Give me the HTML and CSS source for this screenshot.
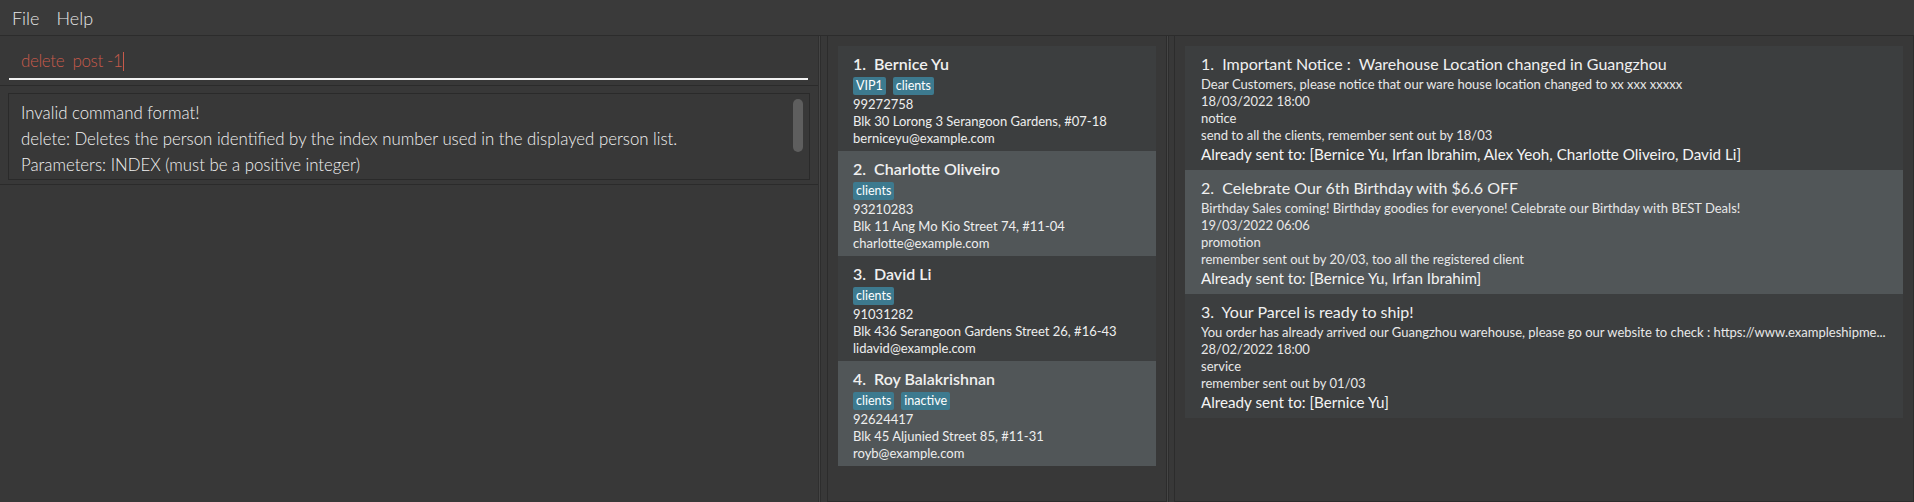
FILE: index.html
```html
<!DOCTYPE html>
<html>
<head>
<meta charset="utf-8">
<link rel="stylesheet" href="styles.css">
</head>
<body>
<div class="app">
  <div class="menubar">
    <span class="menu">File</span>
    <span class="menu">Help</span>
  </div>
  <div class="main">
    <div class="left">
      <div class="command">
        <div class="cmd-input"><span class="cmd-text">delete&nbsp; post -1</span><span class="caret"></span></div>
      </div>
      <div class="result-pane">
        <div class="result-box">
          <div class="result-text">
            <div>Invalid command format!</div>
            <div>delete: Deletes the person identified by the index number used in the displayed person list.</div>
            <div>Parameters: INDEX (must be a positive integer)</div>
          </div>
          <div class="scroll-thumb"></div>
        </div>
      </div>
      <div class="left-rest"></div>
    </div>
    <div class="split"></div>
    <div class="persons">
      <div class="list-box">
        <div class="pcard odd">
          <div class="pname">1.&nbsp; Bernice Yu</div>
          <div class="tags"><span class="tag">VIP1</span><span class="tag">clients</span></div>
          <div class="pline">99272758</div>
          <div class="pline">Blk 30 Lorong 3 Serangoon Gardens, #07-18</div>
          <div class="pline">berniceyu@example.com</div>
        </div>
        <div class="pcard even">
          <div class="pname">2.&nbsp; Charlotte Oliveiro</div>
          <div class="tags"><span class="tag">clients</span></div>
          <div class="pline">93210283</div>
          <div class="pline">Blk 11 Ang Mo Kio Street 74, #11-04</div>
          <div class="pline">charlotte@example.com</div>
        </div>
        <div class="pcard odd">
          <div class="pname">3.&nbsp; David Li</div>
          <div class="tags"><span class="tag">clients</span></div>
          <div class="pline">91031282</div>
          <div class="pline">Blk 436 Serangoon Gardens Street 26, #16-43</div>
          <div class="pline">lidavid@example.com</div>
        </div>
        <div class="pcard even">
          <div class="pname">4.&nbsp; Roy Balakrishnan</div>
          <div class="tags"><span class="tag">clients</span><span class="tag">inactive</span></div>
          <div class="pline">92624417</div>
          <div class="pline">Blk 45 Aljunied Street 85, #11-31</div>
          <div class="pline">royb@example.com</div>
        </div>
      </div>
    </div>
    <div class="split"></div>
    <div class="posts">
      <div class="list-box">
        <div class="post odd">
          <div class="ptitle">1.&nbsp; Important Notice :&nbsp; Warehouse Location changed in Guangzhou</div>
          <div class="plines">
            <div class="qline">Dear Customers, please notice that our ware house location changed to xx xxx xxxxx</div>
            <div class="qline">18/03/2022 18:00</div>
            <div class="qline">notice</div>
            <div class="qline">send to all the clients, remember sent out by 18/03</div>
          </div>
          <div class="sent">Already sent to: [Bernice Yu, Irfan Ibrahim, Alex Yeoh, Charlotte Oliveiro, David Li]</div>
        </div>
        <div class="post even">
          <div class="ptitle">2.&nbsp; Celebrate Our 6th Birthday with $6.6 OFF</div>
          <div class="plines">
            <div class="qline">Birthday Sales coming! Birthday goodies for everyone! Celebrate our Birthday with BEST Deals!</div>
            <div class="qline">19/03/2022 06:06</div>
            <div class="qline">promotion</div>
            <div class="qline">remember sent out by 20/03, too all the registered client</div>
          </div>
          <div class="sent">Already sent to: [Bernice Yu, Irfan Ibrahim]</div>
        </div>
        <div class="post odd">
          <div class="ptitle">3.&nbsp; Your Parcel is ready to ship!</div>
          <div class="plines">
            <div class="qline">You order has already arrived our Guangzhou warehouse, please go our website to check : https://www.exampleshipme...</div>
            <div class="qline">28/02/2022 18:00</div>
            <div class="qline">service</div>
            <div class="qline">remember sent out by 01/03</div>
          </div>
          <div class="sent">Already sent to: [Bernice Yu]</div>
        </div>
      </div>
    </div>
  </div>
</div>
</body>
</html>
```
FILE: styles.css
```css
html, body {
  margin: 0;
  padding: 0;
  background: #383838;
  width: 1914px;
  height: 502px;
  overflow: hidden;
  font-family: Lato, "Open Sans", sans-serif;
  color: #eeeeee;
}
.app {
  display: flex;
  flex-direction: column;
  height: 502px;
}
.menubar {
  height: 35px;
  border-bottom: 1px solid #2c2c2c;
  display: flex;
  align-items: center;
  padding-left: 12px;
  gap: 17px;
  background: #3a3a3a;
}
.menu {
  font-size: 18px;
  font-weight: 300;
  color: #e6e6e6;
}
.main {
  flex: 1;
  display: flex;
  min-height: 0;
}
.left {
  width: 818px;
  display: flex;
  flex-direction: column;
  border-right: 1px solid #2f2f2f;
}
.command {
  height: 50px;
  border-bottom: 1px solid #2b2b2b;
  padding: 0 9px 5px 9px;
  box-sizing: border-box;
  display: flex;
  flex-direction: column;
  justify-content: flex-end;
}
.cmd-input {
  height: 34px;
  border-bottom: 2px solid #f2f2f2;
  display: flex;
  align-items: flex-start;
  padding-left: 12px;
  padding-top: 4px;
  width: 799px;
  box-sizing: border-box;
}
.cmd-text {
  font-size: 17px;
  line-height: 22px;
  font-weight: 300;
  color: #c75a4b;
  white-space: pre;
  letter-spacing: -0.4px;
}
.caret {
  width: 1px;
  height: 19px;
  background: #c75a4b;
  margin-left: 1px;
  margin-top: 2px;
}
.result-pane {
  height: 99px;
  padding: 7px 8px 5px 8px;
  box-sizing: border-box;
  border-bottom: 1px solid #2b2b2b;
}
.result-box {
  height: 87px;
  border: 1px solid #2a2a2a;
  box-sizing: border-box;
  position: relative;
  padding: 6px 12px;
}
.result-text {
  font-size: 16.8px;
  font-weight: 300;
  line-height: 26px;
  color: #f2f2f2;
}
.scroll-thumb {
  position: absolute;
  left: 784px;
  top: 5px;
  width: 10px;
  height: 53px;
  border-radius: 5px;
  background: #5e5e5e;
}
.left-rest { flex: 1; }
.split {
  width: 1px;
  background: #454545;
  border-right: 1px solid #2d2d2d;
}
.persons {
  width: 346px;
  padding-left: 6px;
  box-sizing: border-box;
  display: flex;
}
.posts {
  flex: 1;
  padding-left: 5px;
  display: flex;
}
.list-box {
  flex: 1;
  border: 1px solid #2c2c2c;
  border-top: none;
  padding: 10px;
  display: flex;
  flex-direction: column;
}
.odd { background: #3c3e3f; }
.even { background: #515658; }
.pcard {
  height: 105px;
  box-sizing: border-box;
  padding: 7px 15px 0 15px;
}
.pname {
  font-size: 16px;
  font-weight: 600;
  line-height: 22px;
  color: #f0f0f0;
  white-space: pre;
}
.tags {
  display: flex;
  gap: 7px;
  margin-top: 2px;
  margin-bottom: 1px;
  height: 18px;
}
.tag {
  background: #3d7a8f;
  color: #ffffff;
  font-size: 12.5px;
  line-height: 18px;
  padding: 0 3px;
  border-radius: 2px;
}
.pline {
  font-size: 13px;
  line-height: 17px;
  color: #eeeeee;
  white-space: nowrap;
}
.post {
  height: 124px;
  box-sizing: border-box;
  padding: 8px 6px 0 16px;
}
.ptitle {
  font-size: 16px;
  line-height: 20px;
  color: #f0f0f0;
  white-space: pre;
}
.plines { margin-top: 2px; }
.qline {
  font-size: 13px;
  line-height: 17px;
  color: #e8e8e8;
  white-space: nowrap;
  overflow: hidden;
}
.sent {
  font-size: 15.2px;
  line-height: 20px;
  color: #f4f4f4;
  white-space: nowrap;
}
```
